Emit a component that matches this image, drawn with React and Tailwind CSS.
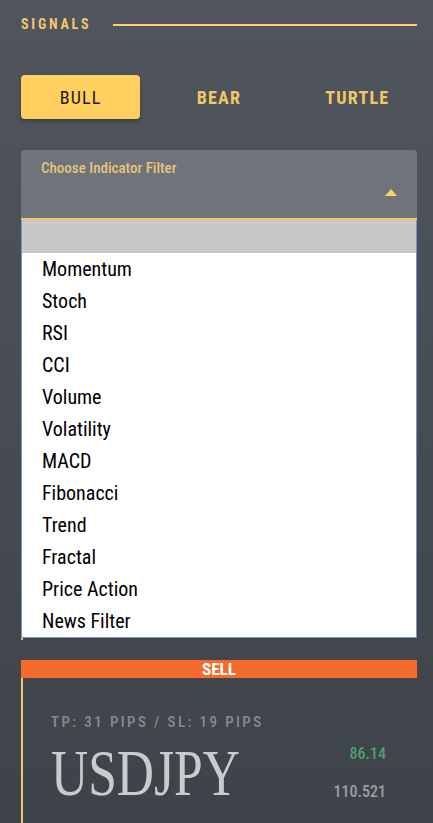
import { useState } from 'react';

const filters = [
    'Momentum',
    'Stoch',
    'RSI',
    'CCI',
    'Volume',
    'Volatility',
    'MACD',
    'Fibonacci',
    'Trend',
    'Fractal',
    'Price Action',
    'News Filter',
];

export default function App() {
    const [mode, setMode] = useState('BULL');

    return (
        <div className="min-h-[823px] w-[433px] overflow-hidden bg-gradient-to-b from-[#51565e] to-[#3e434a] pl-[21px] pr-[16px] pt-[14px] font-['Roboto',sans-serif] font-stretch-[85%]">
            <div className="flex items-center gap-[22px]">
                <span className="text-[14px] font-bold tracking-[2.8px] text-[#f2c766]">SIGNALS</span>
                <div className="h-[2px] flex-1 bg-[#ffcf5f]" />
            </div>

            <div className="mt-[40px] grid grid-cols-3 gap-[19px]">
                {['BULL', 'BEAR', 'TURTLE'].map((m) => (
                    <button
                        key={m}
                        onClick={() => setMode(m)}
                        className={
                            mode === m
                                ? 'h-[44px] rounded-[4px] bg-[#ffcf5f] text-[18px] tracking-[1.2px] text-[#1c1c1c] shadow-[0_2px_4px_rgba(0,0,0,0.3)]'
                                : 'h-[44px] text-[18px] font-bold tracking-[1.2px] text-[#f2c766]'
                        }
                    >
                        {m}
                    </button>
                ))}
            </div>

            <div className="mt-[31px] flex h-[70px] flex-col rounded-t-[4px] border-b-2 border-[#f2c766] bg-[#6f747b] px-[20px] pt-[7px]">
                <span className="text-[15px] font-medium text-[#e6c37c]">Choose Indicator Filter</span>
                <div className="flex justify-end pt-[9px]">
                    <svg width="12" height="7" viewBox="0 0 12 7">
                        <path d="M0 7 L6 0 L12 7 Z" fill="#ffcf5f" />
                    </svg>
                </div>
            </div>

            <div className="border border-t-0 border-[#7d95c6] bg-white">
                <div className="h-[33px] bg-[#c8c8c8]" />
                {filters.map((f) => (
                    <div key={f} className="flex h-[32px] items-center px-[20px] text-[20px] text-black">
                        {f}
                    </div>
                ))}
            </div>
            <div className="h-[2px] w-[2px] bg-[#f2c766]" />

            <div className="mt-[20px] flex h-[18px] items-center justify-center bg-[#f46b2b] text-[17px] font-bold leading-none text-white">
                SELL
            </div>
            <div className="flex h-[160px] border-l-2 border-[#f2c766] pl-[28px] pr-[31px] pt-[33px]">
                <div className="flex-1">
                    <div className="text-[15px] font-medium tracking-[2.4px] text-[#868a90]">TP: 31 PIPS / SL: 19 PIPS</div>
                    <div className="mt-[6px] origin-left scale-x-[0.78] font-['Liberation_Serif',serif] text-[66px] leading-none text-[#c9cbce]">USDJPY</div>
                </div>
                <div className="flex flex-col items-end pt-[31px]">
                    <span className="text-[16px] font-medium text-[#4f9f6b]">86.14</span>
                    <span className="mt-[14px] text-[16px] font-medium text-[#9a9ea4]">110.521</span>
                </div>
            </div>
        </div>
    );
}
